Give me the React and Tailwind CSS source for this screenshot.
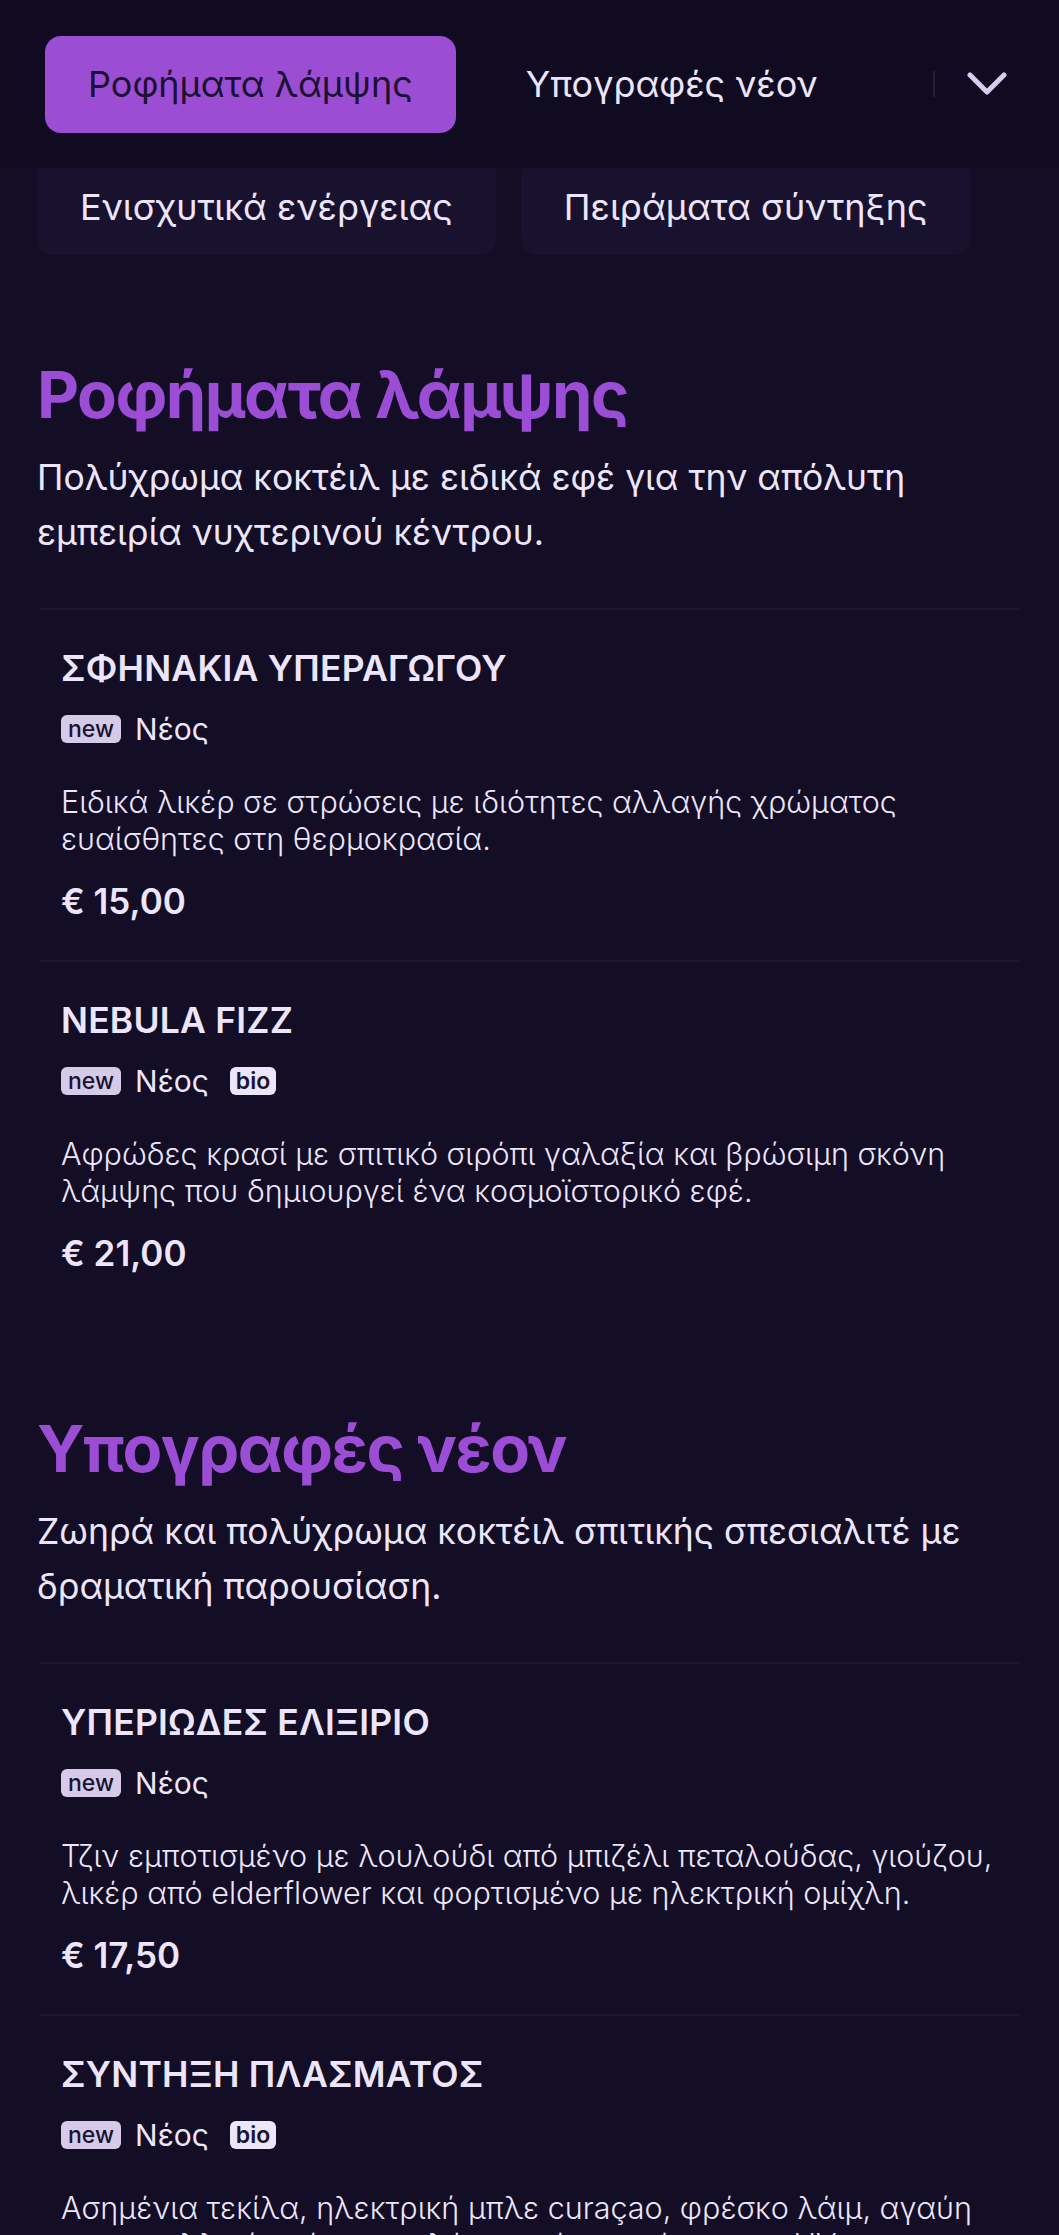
import React from "react";

const sections = [
  {
    title: "Ροφήματα λάμψης",
    desc: "Πολύχρωμα κοκτέιλ με ειδικά εφέ για την απόλυτη εμπειρία νυχτερινού κέντρου.",
    items: [
      {
        name: "ΣΦΗΝΑΚΙΑ ΥΠΕΡΑΓΩΓΟΥ",
        bio: false,
        desc: "Ειδικά λικέρ σε στρώσεις με ιδιότητες αλλαγής χρώματος ευαίσθητες στη θερμοκρασία.",
        price: "€ 15,00",
      },
      {
        name: "NEBULA FIZZ",
        bio: true,
        desc: "Αφρώδες κρασί με σπιτικό σιρόπι γαλαξία και βρώσιμη σκόνη λάμψης που δημιουργεί ένα κοσμοϊστορικό εφέ.",
        price: "€ 21,00",
      },
    ],
  },
  {
    title: "Υπογραφές νέον",
    desc: "Ζωηρά και πολύχρωμα κοκτέιλ σπιτικής σπεσιαλιτέ με δραματική παρουσίαση.",
    items: [
      {
        name: "ΥΠΕΡΙΩΔΕΣ ΕΛΙΞΙΡΙΟ",
        bio: false,
        desc: "Τζιν εμποτισμένο με λουλούδι από μπιζέλι πεταλούδας, γιούζου, λικέρ από elderflower και φορτισμένο με ηλεκτρική ομίχλη.",
        price: "€ 17,50",
      },
      {
        name: "ΣΥΝΤΗΞΗ ΠΛΑΣΜΑΤΟΣ",
        bio: true,
        desc: "Ασημένια τεκίλα, ηλεκτρική μπλε curaçao, φρέσκο λάιμ, αγαύη και μεταλλική σκόνη που λάμπει κάτω από το φως UV.",
        price: "€ 19,00",
      },
    ],
  },
];

function Item({ item }) {
  return (
    <div className="border-t-2 border-[#1c1632] px-[21px] pt-[36px] pb-[36px]">
      <h3 className="text-[35.5px] leading-[45px] font-semibold tracking-[0.2px] text-[#ece5fb]">
        {item.name}
      </h3>
      <div className="mt-[20px] flex items-center h-[36px]">
        <span className="inline-flex items-center justify-center h-[28px] px-[7px] rounded-[6px] bg-[#d5cbe8] text-[#1a1330] text-[23px] leading-none font-medium">
          new
        </span>
        <span className="ml-[14px] text-[30px] leading-[36px] text-[#ece5fb]">Νέος</span>
        {item.bio && (
          <span className="ml-[21px] inline-flex items-center justify-center h-[28px] px-[6px] rounded-[6px] bg-[#ede6fb] text-[#1a1330] text-[23px] leading-none font-semibold">
            bio
          </span>
        )}
      </div>
      <p className="mt-[37px] text-[30.5px] leading-[36.5px] font-light text-[#ece5fb]">
        {item.desc}
      </p>
      <div className="mt-[22px] text-[35px] leading-[45px] font-semibold text-[#ece5fb]">
        {item.price}
      </div>
    </div>
  );
}

function Section({ s }) {
  return (
    <section className="mt-[97px] first:mt-[100px]">
      <h2 className="text-[65px] leading-[79px] font-bold tracking-[-1.5px] text-[#9b4dd6]">
        {s.title}
      </h2>
      <p className="mt-[16px] text-[35.5px] leading-[55px] text-[#ece5fb]">{s.desc}</p>
      <div className="mt-[48px] mx-[3px]">
        {s.items.map((it) => (
          <Item key={it.name} item={it} />
        ))}
      </div>
    </section>
  );
}

export default function App() {
  return (
    <div className="min-h-screen bg-[#130d25] text-[#ece5fb] font-['Inter','Noto_Sans',sans-serif] overflow-hidden">
      <header className="relative z-10 h-[168px] bg-[#110b21] flex items-center pl-[45px] pr-[52px]">
        <nav className="flex-1 flex items-center gap-[27px] overflow-hidden">
          <button className="shrink-0 h-[97px] px-[43px] rounded-[16px] bg-[#9b4dd4] text-[#1b1131] text-[36px] font-normal">
            Ροφήματα λάμψης
          </button>
          <button className="shrink-0 h-[97px] px-[43px] rounded-[16px] text-[#ece5fb] text-[36px] font-normal">
            Υπογραφές νέον
          </button>
        </nav>
        <div className="w-[2px] h-[26px] bg-[#241d3a] mr-[32px]" />
        <svg width="40" height="24" viewBox="0 0 40 24" fill="none">
          <polyline
            points="3,3 20,20 37,3"
            stroke="#d8cdef"
            strokeWidth="5"
            strokeLinecap="round"
            strokeLinejoin="round"
          />
        </svg>
      </header>
      <div className="-mt-[10px] flex gap-[25px] px-[37px]">
        <div className="h-[97px] px-[43px] rounded-[16px] bg-[#19122e] flex items-center text-[36px] text-[#ece5fb]">
          Ενισχυτικά ενέργειας
        </div>
        <div className="h-[97px] px-[43px] rounded-[16px] bg-[#19122e] flex items-center text-[36px] text-[#ece5fb]">
          Πειράματα σύντηξης
        </div>
      </div>
      <main className="px-[37px] pb-[100px]">
        {sections.map((s) => (
          <Section key={s.title} s={s} />
        ))}
      </main>
    </div>
  );
}
